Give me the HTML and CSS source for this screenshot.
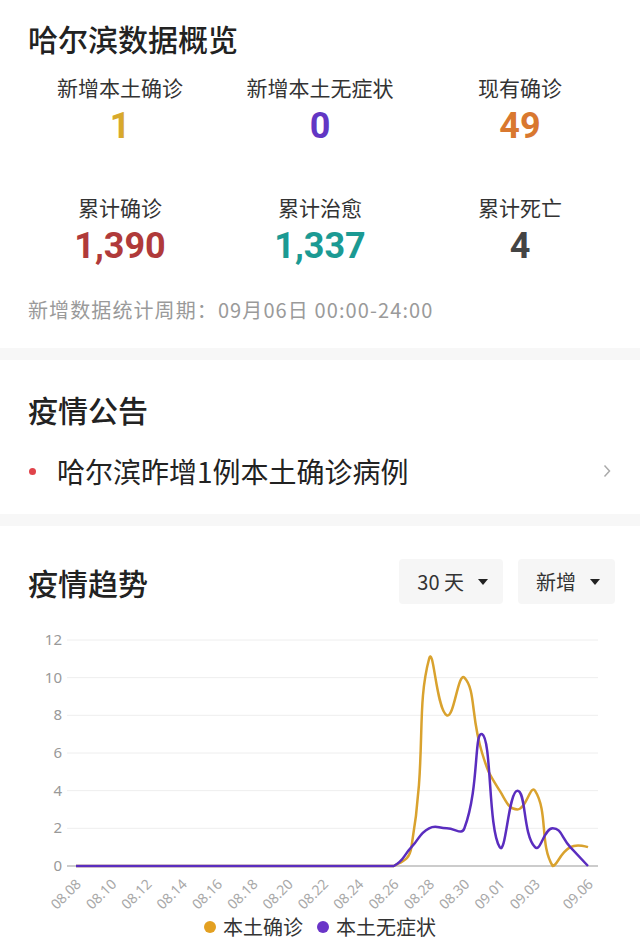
FILE: index.html
```html
<!DOCTYPE html>
<html lang="zh-CN">
<head>
    <meta charset="UTF-8">
    <meta name="viewport" content="width=device-width, initial-scale=1.0">
    <title>哈尔滨数据概览</title>
    <link rel="stylesheet" href="styles.css">
</head>
<body>
    <section class="panel overview">
        <h2 class="panel-title">哈尔滨数据概览</h2>
        <div class="stats">
            <div class="stat">
                <div class="stat-label">新增本土确诊</div>
                <div class="stat-num num-gold">1</div>
            </div>
            <div class="stat">
                <div class="stat-label">新增本土无症状</div>
                <div class="stat-num num-purple">0</div>
            </div>
            <div class="stat">
                <div class="stat-label">现有确诊</div>
                <div class="stat-num num-orange">49</div>
            </div>
            <div class="stat">
                <div class="stat-label">累计确诊</div>
                <div class="stat-num num-red">1,390</div>
            </div>
            <div class="stat">
                <div class="stat-label">累计治愈</div>
                <div class="stat-num num-teal">1,337</div>
            </div>
            <div class="stat">
                <div class="stat-label">累计死亡</div>
                <div class="stat-num num-gray">4</div>
            </div>
        </div>
        <p class="period">新增数据统计周期：09月06日 00:00-24:00</p>
    </section>

    <section class="panel notice">
        <h2 class="panel-title">疫情公告</h2>
        <a class="notice-item" href="#">
            <span class="notice-dot"></span>
            <span class="notice-text">哈尔滨昨增1例本土确诊病例</span>
            <svg class="chevron" width="8" height="14" viewBox="0 0 8 14">
                <polyline points="1.5,1.5 6.5,7 1.5,12.5" fill="none" stroke="#aaa" stroke-width="1.5"/>
            </svg>
        </a>
    </section>

    <section class="trend">
        <div class="trend-head">
            <h2 class="panel-title">疫情趋势</h2>
            <div class="filters">
                <button class="filter">30 天 <i class="caret"></i></button>
                <button class="filter">新增 <i class="caret"></i></button>
            </div>
        </div>
        <svg id="chart" class="chart" width="640" height="305" viewBox="0 610 640 305"></svg>
        <div class="legend">
            <span class="legend-item"><i class="legend-dot dot-gold"></i>本土确诊</span>
            <span class="legend-item"><i class="legend-dot dot-purple"></i>本土无症状</span>
        </div>
    </section>

    <script>
        const NS = 'http://www.w3.org/2000/svg';
        const chart = document.getElementById('chart');

        // 08.08 - 09.06, 30 days
        const dates = [];
        for (let d = 8; d <= 31; d++) dates.push('08.' + String(d).padStart(2, '0'));
        for (let d = 1; d <= 6; d++) dates.push('09.0' + d);

        const zeros = new Array(19).fill(0);
        const confirmed = zeros.concat([1, 11, 8, 10, 6, 4, 3, 4, 0, 1, 1]);
        const asymptomatic = zeros.concat([1, 2, 2, 2, 7, 1, 4, 1, 2, 1, 0]);

        const gridLeft = 67, gridRight = 598;
        const xStart = 76, xEnd = 588;
        const yBase = 867, yTop = 641, yMax = 12;
        const step = (xEnd - xStart) / (dates.length - 1);
        const unit = (yBase - yTop) / yMax;

        function el(tag, attrs, text) {
            const node = document.createElementNS(NS, tag);
            for (const k in attrs) node.setAttribute(k, attrs[k]);
            if (text) node.textContent = text;
            chart.appendChild(node);
            return node;
        }

        // grid lines + y labels
        for (let v = 0; v <= yMax; v += 2) {
            const y = yBase - v * unit;
            el('line', { x1: gridLeft, x2: gridRight, y1: y, y2: y, stroke: v === 0 ? '#999' : '#eee', 'stroke-width': 1 });
            el('text', { x: 62, y: y + 5, 'text-anchor': 'end', class: 'axis-label y-label' }, String(v));
        }

        // x labels, every other day plus the last one
        dates.forEach((d, i) => {
            const last = dates.length - 1;
            if (i !== last && (i % 2 !== 0 || i === last - 1)) return;
            const x = xStart + i * step + 6;
            const y = yBase + 19;
            el('text', { x: x, y: y, 'text-anchor': 'end', class: 'axis-label', transform: `rotate(-45 ${x} ${y})` }, d);
        });

        // smooth line, control points kept above the zero line
        function smoothPath(values, smooth) {
            const pts = values.map((v, i) => [xStart + i * step, yBase - v * unit]);
            let d = `M${pts[0][0]},${pts[0][1]}`;
            let cp0 = pts[0];
            for (let i = 1; i < pts.length; i++) {
                const [x, y] = pts[i];
                const prev = pts[i - 1];
                let cp1 = [x, y], next0 = null;
                if (i < pts.length - 1) {
                    const next = pts[i + 1];
                    const vx = next[0] - prev[0], vy = next[1] - prev[1];
                    const d0 = Math.hypot(x - prev[0], y - prev[1]);
                    const d1 = Math.hypot(next[0] - x, next[1] - y);
                    const r = d1 / (d0 + d1);
                    cp1 = [x - vx * smooth * (1 - r), Math.min(yBase, y - vy * smooth * (1 - r))];
                    next0 = [x + vx * smooth * r, Math.min(yBase, y + vy * smooth * r)];
                }
                d += ` C${cp0[0].toFixed(1)},${cp0[1].toFixed(1)} ${cp1[0].toFixed(1)},${cp1[1].toFixed(1)} ${x.toFixed(1)},${y.toFixed(1)}`;
                cp0 = next0;
            }
            return d;
        }

        el('path', { d: smoothPath(confirmed, 0.5), class: 'series series-gold' });
        el('path', { d: smoothPath(asymptomatic, 0.5), class: 'series series-purple' });
    </script>
</body>
</html>
```

FILE: styles.css
```css
body {
    margin: 0;
    background-color: #fff;
    color: #222;
    font-family: "Noto Sans CJK SC", "Noto Sans", sans-serif;
}
h2 {
    margin: 0;
}
.panel {
    border-bottom: 12px solid #f7f7f7;
}
.panel-title {
    padding: 0 28px;
    font-size: 30px;
    line-height: 40px;
    font-weight: 500;
    color: #222;
}

/* overview */
.overview {
    padding: 18px 0 25px;
}
.stats {
    display: grid;
    grid-template-columns: repeat(3, 1fr);
    row-gap: 48px;
    padding: 0 20px;
    margin-top: 16px;
    text-align: center;
}
.stat-label {
    font-size: 21px;
    line-height: 26px;
    color: #333;
}
.stat-num {
    margin-top: 6px;
    font-family: Roboto, "Noto Sans", sans-serif;
    font-size: 36px;
    line-height: 40px;
    font-weight: 700;
}
.num-gold { color: #d8a92c; }
.num-purple { color: #6236c4; }
.num-orange { color: #d9782f; }
.num-red { color: #b03a3a; }
.num-teal { color: #1b9a93; }
.num-gray { color: #444; }
.period {
    margin: 31px 0 0;
    padding: 0 28px;
    font-size: 20px;
    line-height: 26px;
    letter-spacing: 1.1px;
    color: #9a9a9a;
}

/* notice */
.notice {
    padding: 29px 0 26px;
}
.notice-item {
    display: flex;
    align-items: center;
    margin-top: 25px;
    padding: 0 29px;
    text-decoration: none;
    color: #222;
}
.notice-dot {
    width: 7px;
    height: 7px;
    border-radius: 50%;
    background-color: #e0434a;
    margin-right: 21px;
}
.notice-text {
    flex: 1;
    font-size: 28px;
    line-height: 34px;
}

/* trend */
.trend {
    padding-top: 33px;
}
.trend-head {
    display: flex;
    align-items: center;
    justify-content: space-between;
    padding-right: 25px;
}
.filters {
    display: flex;
    gap: 15px;
}
.filter {
    display: flex;
    align-items: center;
    gap: 14px;
    height: 45px;
    padding: 0 15px 0 18px;
    border: none;
    border-radius: 4px;
    background-color: #f6f6f6;
    color: #333;
    font-family: "Noto Sans CJK SC", "Noto Sans", sans-serif;
    font-size: 20px;
}
.caret {
    width: 0;
    height: 0;
    border-left: 5px solid transparent;
    border-right: 5px solid transparent;
    border-top: 6px solid #222;
}
.chart {
    display: block;
    margin-top: 5px;
}
.axis-label {
    font-family: "Noto Sans", sans-serif;
    font-size: 14px;
    fill: #a8a8a8;
}
.y-label {
    font-size: 15px;
    fill: #999;
}
.series {
    fill: none;
    stroke-width: 2.5;
    stroke-linejoin: round;
}
.series-gold { stroke: #d9a22e; }
.series-purple { stroke: #5a2dbf; }
.legend {
    display: flex;
    justify-content: center;
    gap: 14px;
    font-size: 20px;
    line-height: 26px;
    color: #333;
}
.legend-item {
    display: flex;
    align-items: center;
    gap: 7px;
}
.legend-dot {
    width: 12px;
    height: 12px;
    border-radius: 50%;
}
.dot-gold { background-color: #e3a021; }
.dot-purple { background-color: #6a35c8; }
```
